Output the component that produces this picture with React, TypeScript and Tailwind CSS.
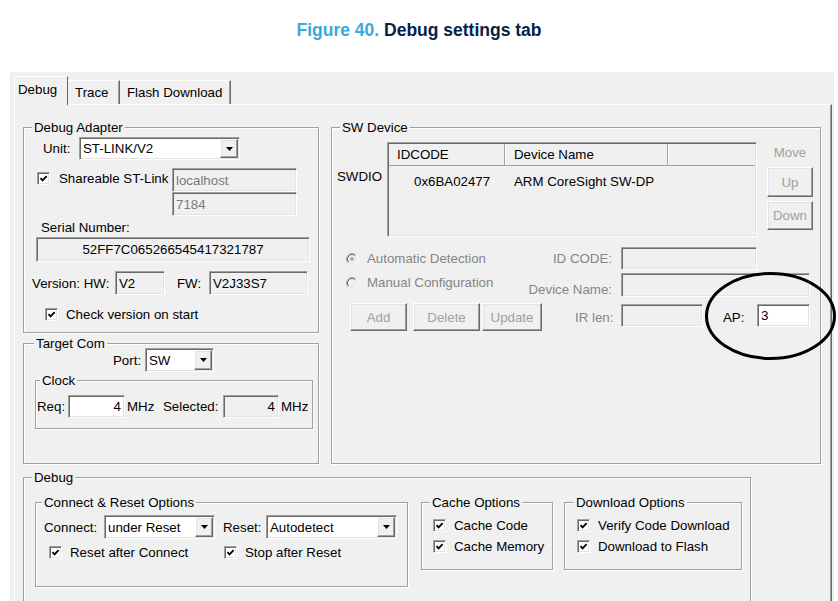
import React from 'react';

// Windows classic 3D edges
const SUNKEN =
  'border border-t-[#a0a0a0] border-l-[#a0a0a0] border-r-white border-b-white shadow-[inset_1px_1px_0_#696969,inset_-1px_-1px_0_#e3e3e3]';
const RAISED =
  'border border-t-white border-l-white border-r-[#696969] border-b-[#696969] shadow-[inset_-1px_-1px_0_#a0a0a0,inset_1px_1px_0_#e3e3e3]';

type BoxProps = { className?: string; children?: React.ReactNode };

const GroupBox: React.FC<BoxProps & { title: string; titleClass?: string }> = ({
  title,
  titleClass = 'left-[8px]',
  className = '',
  children,
}) => (
  <div className={`relative shrink-0 flex flex-col border border-[#a0a0a0] shadow-[inset_1px_1px_0_#fff,1px_1px_0_#fff] ${className}`}>
    <span className={`absolute -top-[8px] px-[2px] bg-[#f0f0f0] leading-[15px] whitespace-nowrap ${titleClass}`}>
      {title}
    </span>
    {children}
  </div>
);

const Edit: React.FC<{
  value?: string;
  className?: string;
  tone?: 'white' | 'grey' | 'dim';
}> = ({ value = '', className = '', tone = 'white' }) => {
  const toneClass =
    tone === 'white' ? 'bg-white text-black' : tone === 'grey' ? 'bg-[#f0f0f0] text-[#7a7a7a]' : 'bg-[#f0f0f0] text-black';
  return (
    <div className={`${SUNKEN} ${toneClass} shrink-0 flex items-center px-[3px] leading-[15px] whitespace-nowrap ${className}`}>
      {value}
    </div>
  );
};

const Combo: React.FC<{ value: string; className?: string }> = ({ value, className = '' }) => (
  <div className={`${SUNKEN} shrink-0 bg-white flex items-stretch ${className}`}>
    <span className="flex-1 flex items-center pl-[3px] leading-[15px] whitespace-nowrap overflow-hidden">{value}</span>
    <span className={`${RAISED} bg-[#f0f0f0] w-[18px] m-[1px] flex items-center justify-center`}>
      <svg width="7" height="4" viewBox="0 0 7 4">
        <path d="M0 0h7L3.5 4z" fill="#000" />
      </svg>
    </span>
  </div>
);

const CheckBox: React.FC = () => (
  <span className={`${SUNKEN} bg-white w-[13px] h-[13px] shrink-0 flex items-center justify-center`}>
    <svg width="9" height="9" viewBox="0 0 9 9">
      <path d="M1.5 4.2 3.6 6.4 7.6 2.2" fill="none" stroke="#000" strokeWidth="1.8" />
    </svg>
  </span>
);

const Check: React.FC<{ label: string; className?: string }> = ({ label, className = '' }) => (
  <div className={`flex items-center gap-[8px] leading-[15px] whitespace-nowrap ${className}`}>
    <CheckBox />
    <span>{label}</span>
  </div>
);

const Radio: React.FC<{ label: string; selected?: boolean; className?: string }> = ({
  label,
  selected = false,
  className = '',
}) => (
  <div className={`flex items-center gap-[9px] leading-[15px] whitespace-nowrap text-[#858585] ${className}`}>
    <svg width="12" height="12" viewBox="0 0 12 12" className="shrink-0">
      <circle cx="6" cy="6" r="4.2" fill="#f0f0f0" />
      <path d="M2.11 9.89A5.5 5.5 0 0 1 9.89 2.11" fill="none" stroke="#a0a0a0" />
      <path d="M9.89 2.11A5.5 5.5 0 0 1 2.11 9.89" fill="none" stroke="#fff" />
      <path d="M2.82 9.18A4.5 4.5 0 0 1 9.18 2.82" fill="none" stroke="#696969" />
      <path d="M9.18 2.82A4.5 4.5 0 0 1 2.82 9.18" fill="none" stroke="#e3e3e3" />
      {selected && <circle cx="6" cy="6" r="1.8" fill="#a0a0a0" />}
    </svg>
    <span>{label}</span>
  </div>
);

const Btn: React.FC<{ label: string; className?: string }> = ({ label, className = '' }) => (
  <div className={`${RAISED} bg-[#f0f0f0] shrink-0 flex items-center justify-center text-[#a0a0a0] leading-[15px] ${className}`}>
    {label}
  </div>
);

const DebugAdapter: React.FC = () => (
  <GroupBox title="Debug Adapter" className="w-[296px] h-[206px]">
    <div className="flex items-center mt-[9px] ml-[19px] h-[23px]">
      <span className="w-[36px] leading-[15px]">Unit:</span>
      <Combo value="ST-LINK/V2" className="w-[161px] h-[23px]" />
    </div>
    <div className="flex items-start mt-[8px] ml-[13px]">
      <div className="flex items-center gap-[9px] mt-[3px] w-[135px] leading-[15px] whitespace-nowrap">
        <CheckBox />
        <span>Shareable ST-Link</span>
      </div>
      <div className="flex flex-col">
        <Edit value="localhost" tone="grey" className="w-[125px] h-[24px]" />
        <Edit value="7184" tone="grey" className="w-[125px] h-[24px]" />
      </div>
    </div>
    <span className="mt-[4px] ml-[17px] leading-[15px]">Serial Number:</span>
    <Edit value="52FF7C065266545417321787" tone="dim" className="mt-[2px] ml-[12px] w-[274px] h-[25px] justify-center" />
    <div className="flex items-center mt-[9px] ml-[8px] h-[24px]">
      <span className="w-[83px] leading-[15px] whitespace-nowrap">Version: HW:</span>
      <Edit value="V2" tone="dim" className="w-[50px] h-[24px]" />
      <span className="ml-[12px] w-[32px] leading-[15px]">FW:</span>
      <Edit value="V2J33S7" tone="dim" className="w-[99px] h-[24px]" />
    </div>
    <Check label="Check version on start" className="mt-[12px] ml-[21px]" />
  </GroupBox>
);

const TargetCom: React.FC = () => (
  <GroupBox title="Target Com" titleClass="left-[10px]" className="mt-[10px] w-[296px] h-[121px]">
    <div className="flex items-center mt-[4px] ml-[89px] h-[24px]">
      <span className="w-[32px] leading-[15px]">Port:</span>
      <Combo value="SW" className="w-[69px] h-[24px]" />
    </div>
    <GroupBox title="Clock" titleClass="left-[4px]" className="mt-[8px] ml-[11px] w-[278px] h-[49px]">
      <div className="flex items-center mt-[14px] ml-[1px] h-[23px] whitespace-nowrap">
        <span className="w-[31px] leading-[15px]">Req:</span>
        <Edit value="4" className="w-[57px] h-[23px] justify-end" />
        <span className="ml-[2px] w-[36px] leading-[15px]">MHz</span>
        <span className="w-[60px] leading-[15px]">Selected:</span>
        <Edit value="4" tone="dim" className="w-[56px] h-[23px] justify-end" />
        <span className="ml-[2px] leading-[15px]">MHz</span>
      </div>
    </GroupBox>
  </GroupBox>
);

const DeviceList: React.FC = () => (
  <div className={`${SUNKEN} w-[370px] h-[95px] bg-[#f0f0f0] shrink-0 flex flex-col p-[1px]`}>
    <div className="flex h-[22px] border-b border-b-[#a0a0a0] leading-[15px]">
      <div className="w-[116px] flex items-center pl-[8px] border-r border-r-[#a0a0a0]">IDCODE</div>
      <div className="w-[163px] flex items-center pl-[8px] border-l border-l-white border-r border-r-[#a0a0a0]">
        Device Name
      </div>
      <div className="flex-1 border-l border-l-white" />
    </div>
    <div className="flex pt-[8px] leading-[15px] whitespace-nowrap">
      <div className="w-[116px] pl-[25px]">0x6BA02477</div>
      <div className="pl-[9px]">ARM CoreSight SW-DP</div>
    </div>
  </div>
);

const SwDevice: React.FC = () => (
  <GroupBox title="SW Device" titleClass="left-[8px]" className="w-[490px] h-[337px]">
    <div className="flex items-start mt-[14px]">
      <span className="ml-[5px] w-[50px] mt-[27px] leading-[15px]">SWDIO</span>
      <DeviceList />
      <div className="ml-[10px] w-[46px] flex flex-col">
        <span className="mt-[3px] leading-[15px] text-center text-[#a0a0a0]">Move</span>
        <Btn label="Up" className="mt-[7px] h-[30px]" />
        <Btn label="Down" className="mt-[4px] h-[29px]" />
      </div>
    </div>
    <div className="flex items-center mt-[10px] h-[23px]">
      <div className="w-[187px]">
        <Radio label="Automatic Detection" selected className="ml-[14px]" />
      </div>
      <span className="w-[102px] pr-[9px] text-right leading-[15px] text-[#858585]">ID CODE:</span>
      <Edit tone="grey" className="w-[136px] h-[23px]" />
    </div>
    <div className="flex items-start mt-[3px] h-[24px]">
      <div className="w-[187px] mt-[2px]">
        <Radio label="Manual Configuration" className="ml-[14px]" />
      </div>
      <span className="w-[102px] pr-[9px] mt-[9px] text-right leading-[15px] text-[#858585] whitespace-nowrap">
        Device Name:
      </span>
      <Edit tone="grey" className="w-[189px] h-[24px]" />
    </div>
    <div className="flex items-start mt-[6px] h-[28px]">
      <div className="w-[243px] flex">
        <Btn label="Add" className="ml-[18px] w-[57px] h-[28px]" />
        <Btn label="Delete" className="ml-[6px] w-[67px] h-[28px]" />
        <Btn label="Update" className="ml-[2px] w-[60px] h-[28px]" />
      </div>
      <span className="w-[46px] pr-[9px] mt-[7px] text-right leading-[15px] text-[#858585] whitespace-nowrap">
        IR len:
      </span>
      <Edit tone="grey" className="mt-[1px] w-[82px] h-[23px]" />
      <span className="ml-[20px] mt-[7px] w-[34px] leading-[15px]">AP:</span>
      <Edit value="3" className="mt-[1px] w-[53px] h-[23px]" />
    </div>
  </GroupBox>
);

const DebugGroup: React.FC = () => (
  <GroupBox title="Debug" className="mt-[13px] w-[728px] h-[140px]">
    <div className="flex items-start mt-[24px] ml-[11px]">
      <GroupBox title="Connect & Reset Options" titleClass="left-[6px]" className="w-[373px] h-[85px]">
        <div className="flex items-center mt-[12px] ml-[8px] h-[24px] whitespace-nowrap">
          <span className="w-[60px] leading-[15px]">Connect:</span>
          <Combo value="under Reset" className="w-[111px] h-[24px]" />
          <span className="ml-[8px] w-[43px] leading-[15px]">Reset:</span>
          <Combo value="Autodetect" className="w-[131px] h-[24px]" />
        </div>
        <div className="flex mt-[6px] ml-[13px]">
          <Check label="Reset after Connect" className="w-[175px]" />
          <Check label="Stop after Reset" />
        </div>
      </GroupBox>
      <GroupBox title="Cache Options" titleClass="left-[8px]" className="ml-[13px] w-[132px] h-[68px]">
        <Check label="Cache Code" className="mt-[15px] ml-[11px]" />
        <Check label="Cache Memory" className="mt-[6px] ml-[11px]" />
      </GroupBox>
      <GroupBox title="Download Options" titleClass="left-[9px]" className="ml-[11px] w-[178px] h-[68px]">
        <Check label="Verify Code Download" className="mt-[15px] ml-[12px]" />
        <Check label="Download to Flash" className="mt-[6px] ml-[12px]" />
      </GroupBox>
    </div>
  </GroupBox>
);

export default function App() {
  return (
    <div className="relative w-[838px] h-[601px] overflow-hidden bg-white text-black text-[13.3px] font-['Liberation_Sans',Arial,sans-serif]">
      <div className="h-[72px] pt-[20px] text-center text-[17.5px] font-bold leading-[20px]">
        <span className="text-[#39a9dc]">Figure 40.</span> <span className="text-[#03234b]">Debug settings tab</span>
      </div>

      <div className="ml-[10px] w-[824px] h-[529px] bg-[#f0f0f0] flex flex-col overflow-hidden">
        {/* tab strip */}
        <div className="shrink-0 flex items-end h-[32px] pl-[4px] leading-[15px] whitespace-nowrap">
          <div className="relative z-10 -mb-[1px] h-[29px] w-[54px] bg-[#f0f0f0] border-t border-l border-r border-t-white border-l-white border-r-[#696969] pl-[3px] pt-[5px]">
            Debug
          </div>
          <div className="h-[24px] w-[52px] border-t border-r border-t-white border-r-[#696969] shadow-[inset_-1px_0_0_#a0a0a0] pl-[7px] pt-[4px]">
            Trace
          </div>
          <div className="h-[24px] w-[111px] border-t border-r border-t-white border-r-[#696969] shadow-[inset_-1px_0_0_#a0a0a0] pl-[7px] pt-[4px]">
            Flash Download
          </div>
        </div>

        {/* tab page */}
        <div className="shrink-0 h-[520px] ml-[4px] w-[818px] border-t border-l border-r border-t-white border-l-white border-r-[#696969] shadow-[inset_-1px_0_0_#a0a0a0] pl-[8px] pt-[22px] flex flex-col">
          <div className="flex items-start gap-[12px]">
            <div className="flex flex-col">
              <DebugAdapter />
              <TargetCom />
            </div>
            <SwDevice />
          </div>
          <DebugGroup />
        </div>
      </div>

      {/* annotation ring around the AP field */}
      <svg className="absolute left-[704px] top-[271px]" width="134" height="90" viewBox="0 0 134 90">
        <ellipse cx="66.5" cy="45" rx="64" ry="42.5" fill="none" stroke="#000" strokeWidth="3" />
      </svg>
    </div>
  );
}
